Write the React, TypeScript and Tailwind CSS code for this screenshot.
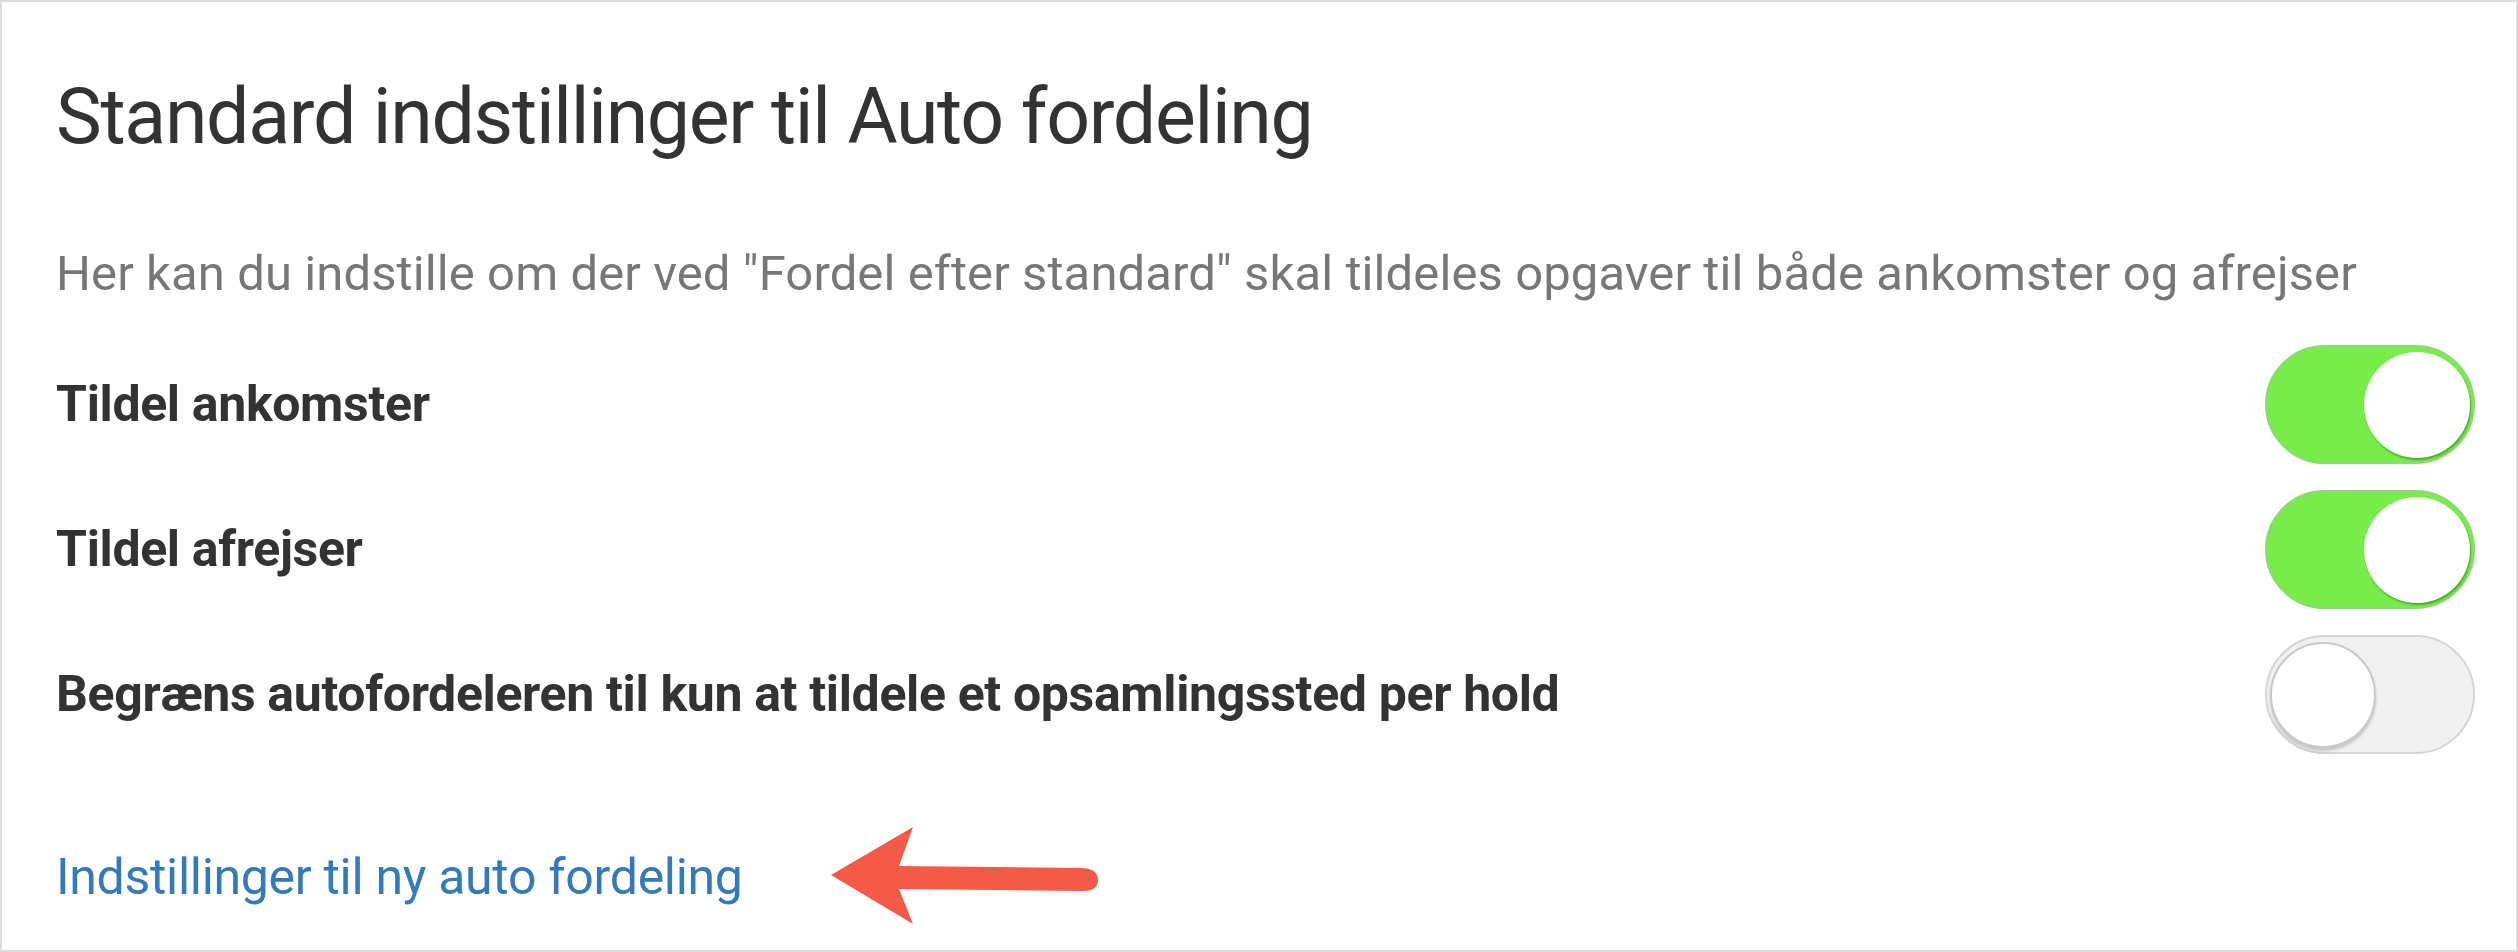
import React, { useState } from "react";

type ToggleProps = { on: boolean; onChange: () => void };

function Toggle({ on, onChange }: ToggleProps) {
  return (
    <button
      type="button"
      onClick={onChange}
      className={
        "relative flex h-[119px] w-[210px] shrink-0 items-center rounded-full border-2 p-[3px] " +
        (on
          ? "justify-end border-[#8fd877] bg-[#77ec4a]"
          : "justify-start border-[#d4d4d4] bg-[#f0f0f0]")
      }
    >
      <span
        className={
          "block h-[106px] w-[106px] rounded-full bg-white " +
          (on
            ? "shadow-[1px_2px_2px_rgba(40,120,20,0.55)]"
            : "border-2 border-[#c9c9c9] shadow-[0_3px_3px_rgba(0,0,0,0.18)]")
        }
      />
    </button>
  );
}

function Arrow() {
  return (
    <svg width="270" height="100" viewBox="0 0 270 100" className="shrink-0">
      <path
        d="M0 48 L82 0 L68 39 L252 41 Q267 42 267 53 Q267 64 252 64 L68 62 L82 97 Z"
        fill="#f45a48"
      />
    </svg>
  );
}

export default function App() {
  const [rows, setRows] = useState([
    { label: "Tildel ankomster", on: true },
    { label: "Tildel afrejser", on: true },
    { label: "Begræns autofordeleren til kun at tildele et opsamlingssted per hold", on: false },
  ]);

  const flip = (i: number) =>
    setRows((r) => r.map((x, j) => (j === i ? { ...x, on: !x.on } : x)));

  return (
    <div
      className="h-[952px] w-[2518px] border-2 border-[#dddddd] bg-white pl-[54px] pr-[41px] pt-[68px]"
      style={{ fontFamily: "Roboto, 'Noto Sans', sans-serif" }}
    >
      <h1 className="text-[77px] leading-[94px] font-normal tracking-[-1.3px] text-[#333333]">
        Standard indstillinger til Auto fordeling
      </h1>
      <p className="mt-[80px] text-[49px] leading-[60px] tracking-[0.1px] text-[#777777]">
        Her kan du indstille om der ved "Fordel efter standard" skal tildeles opgaver til både ankomster og afrejser
      </p>
      <div className="mt-[28px] flex flex-col">
        {rows.map((r, i) => (
          <div key={r.label} className="flex h-[145px] items-center justify-between">
            <span className="text-[50px] font-bold tracking-[-0.35px] text-[#333333]">{r.label}</span>
            <Toggle on={r.on} onChange={() => flip(i)} />
          </div>
        ))}
      </div>
      <div className="mt-[60px] flex items-center gap-[88px]">
        <a href="#" className="text-[50px] leading-[64px] tracking-[-0.3px] text-[#337ab7]">
          Indstillinger til ny auto fordeling
        </a>
        <Arrow />
      </div>
    </div>
  );
}
